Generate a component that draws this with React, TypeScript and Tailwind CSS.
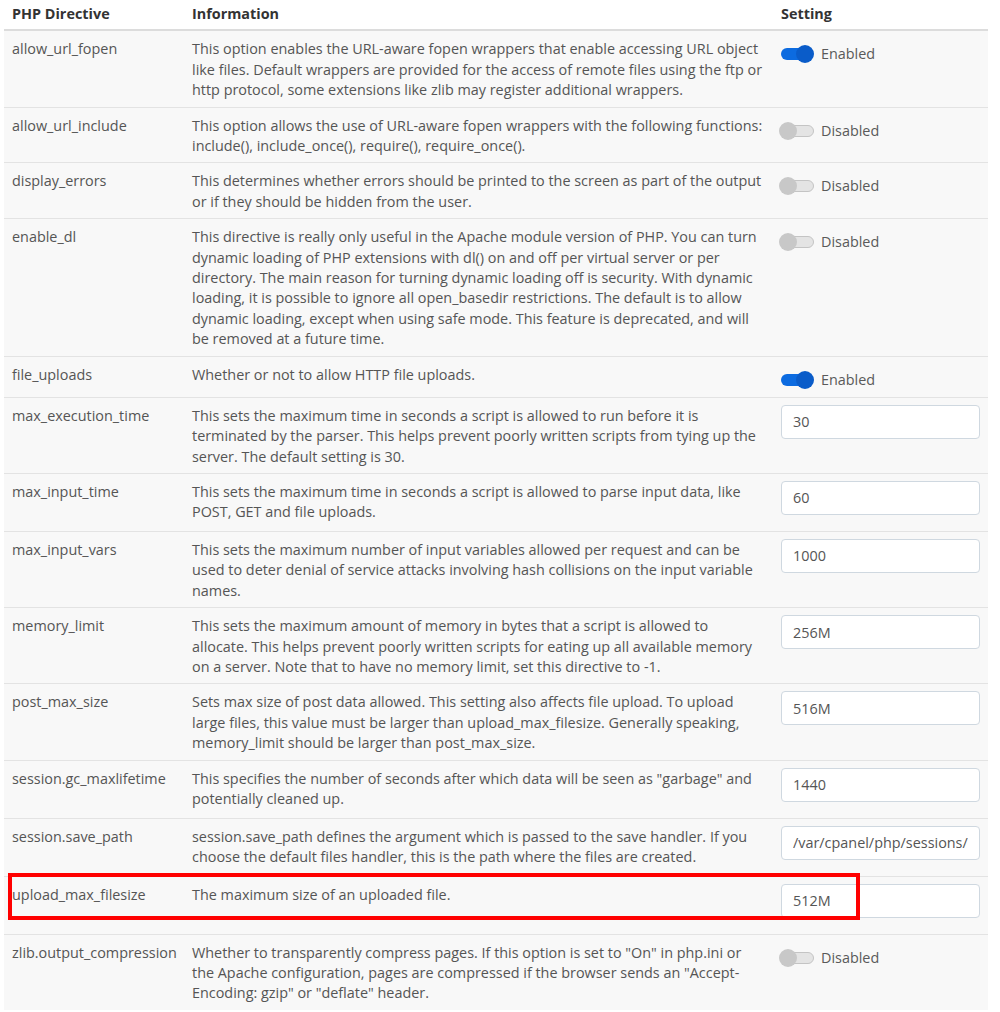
import React from 'react';

type Row = {
  name: string;
  info: string;
  toggle?: boolean;
  value?: string;
};

const rows: Row[] = [
  {
    name: 'allow_url_fopen',
    info: 'This option enables the URL-aware fopen wrappers that enable accessing URL object like files. Default wrappers are provided for the access of remote files using the ftp or http protocol, some extensions like zlib may register additional wrappers.',
    toggle: true,
  },
  {
    name: 'allow_url_include',
    info: 'This option allows the use of URL-aware fopen wrappers with the following functions: include(), include_once(), require(), require_once().',
    toggle: false,
  },
  {
    name: 'display_errors',
    info: 'This determines whether errors should be printed to the screen as part of the output or if they should be hidden from the user.',
    toggle: false,
  },
  {
    name: 'enable_dl',
    info: 'This directive is really only useful in the Apache module version of PHP. You can turn dynamic loading of PHP extensions with dl() on and off per virtual server or per directory. The main reason for turning dynamic loading off is security. With dynamic loading, it is possible to ignore all open_basedir restrictions. The default is to allow dynamic loading, except when using safe mode. This feature is deprecated, and will be removed at a future time.',
    toggle: false,
  },
  {
    name: 'file_uploads',
    info: 'Whether or not to allow HTTP file uploads.',
    toggle: true,
  },
  {
    name: 'max_execution_time',
    info: 'This sets the maximum time in seconds a script is allowed to run before it is terminated by the parser. This helps prevent poorly written scripts from tying up the server. The default setting is 30.',
    value: '30',
  },
  {
    name: 'max_input_time',
    info: 'This sets the maximum time in seconds a script is allowed to parse input data, like POST, GET and file uploads.',
    value: '60',
  },
  {
    name: 'max_input_vars',
    info: 'This sets the maximum number of input variables allowed per request and can be used to deter denial of service attacks involving hash collisions on the input variable names.',
    value: '1000',
  },
  {
    name: 'memory_limit',
    info: 'This sets the maximum amount of memory in bytes that a script is allowed to allocate. This helps prevent poorly written scripts for eating up all available memory on a server. Note that to have no memory limit, set this directive to -1.',
    value: '256M',
  },
  {
    name: 'post_max_size',
    info: 'Sets max size of post data allowed. This setting also affects file upload. To upload large files, this value must be larger than upload_max_filesize. Generally speaking, memory_limit should be larger than post_max_size.',
    value: '516M',
  },
  {
    name: 'session.gc_maxlifetime',
    info: 'This specifies the number of seconds after which data will be seen as "garbage" and potentially cleaned up.',
    value: '1440',
  },
  {
    name: 'session.save_path',
    info: 'session.save_path defines the argument which is passed to the save handler. If you choose the default files handler, this is the path where the files are created.',
    value: '/var/cpanel/php/sessions/ea-php74',
  },
  {
    name: 'upload_max_filesize',
    info: 'The maximum size of an uploaded file.',
    value: '512M',
  },
  {
    name: 'zlib.output_compression',
    info: 'Whether to transparently compress pages. If this option is set to "On" in php.ini or the Apache configuration, pages are compressed if the browser sends an "Accept-Encoding: gzip" or "deflate" header.',
    toggle: false,
  },
];

function Toggle({ on }: { on: boolean }) {
  return (
    <div className="mt-[5px] flex items-center gap-[5px] h-5 leading-5">
      <div className="relative w-[35px] h-5 shrink-0">
        {on ? (
          <>
            <div className="absolute left-0 top-[4px] w-[30px] h-[12px] rounded-full bg-[#0c6be0]" />
            <div className="absolute left-[15px] top-[1px] w-[18px] h-[18px] rounded-full bg-[#0a5cc9]" />
          </>
        ) : (
          <>
            <div className="absolute left-[4px] top-[4px] w-[29px] h-[12px] rounded-full bg-[#e4e4e4] border border-[#c4c4c4]" />
            <div className="absolute left-[-2px] top-[1px] w-[18px] h-[18px] rounded-full bg-[#c8c8c8]" />
          </>
        )}
      </div>
      <span className="text-[#5a5a5a]">{on ? 'Enabled' : 'Disabled'}</span>
    </div>
  );
}

export default function App() {
  return (
    <div
      className="relative min-h-[1012px] bg-white pl-1 text-[14.4px] leading-[20.4px] text-[#555]"
      style={{ fontFamily: '"Open Sans", "Liberation Sans", sans-serif' }}
    >
      <table className="w-[984px] table-fixed border-collapse">
        <colgroup>
          <col className="w-[180px]" />
          <col className="w-[589px]" />
          <col className="w-[215px]" />
        </colgroup>
        <thead>
          <tr className="border-b-2 border-[#dcdcdc] bg-white">
            <th className="text-left font-bold text-[#333] px-2 pt-1 pb-[5px]">PHP Directive</th>
            <th className="text-left font-bold text-[#333] px-2 pt-1 pb-[5px]">Information</th>
            <th className="text-left font-bold text-[#333] px-2 pt-1 pb-[5px]">Setting</th>
          </tr>
        </thead>
        <tbody>
          {rows.map((r) => (
            <tr key={r.name} className="border-t border-[#e3e3e3] bg-[#f8f8f8]">
              <td className="align-top px-2 pt-2 pb-[6px] whitespace-nowrap">{r.name}</td>
              <td className="align-top px-2 pt-2 pb-[6px]">{r.info}</td>
              {r.value !== undefined ? (
                <td className="align-top px-2 pt-[7px] pb-2">
                  <input
                    readOnly
                    value={r.value}
                    className="block w-[199px] h-[34px] mb-2 px-[11px] rounded-[4px] border border-[#cfd8e0] bg-white text-[#555] outline-none"
                  />
                </td>
              ) : (
                <td className="align-top px-2 pt-2 pb-[7px]">
                  <Toggle on={!!r.toggle} />
                </td>
              )}
            </tr>
          ))}
        </tbody>
      </table>
      {/* annotation around upload_max_filesize */}
      <div className="absolute left-[8px] top-[873px] w-[852px] h-[47px] border-4 border-[#ff0000] pointer-events-none" />
    </div>
  );
}
